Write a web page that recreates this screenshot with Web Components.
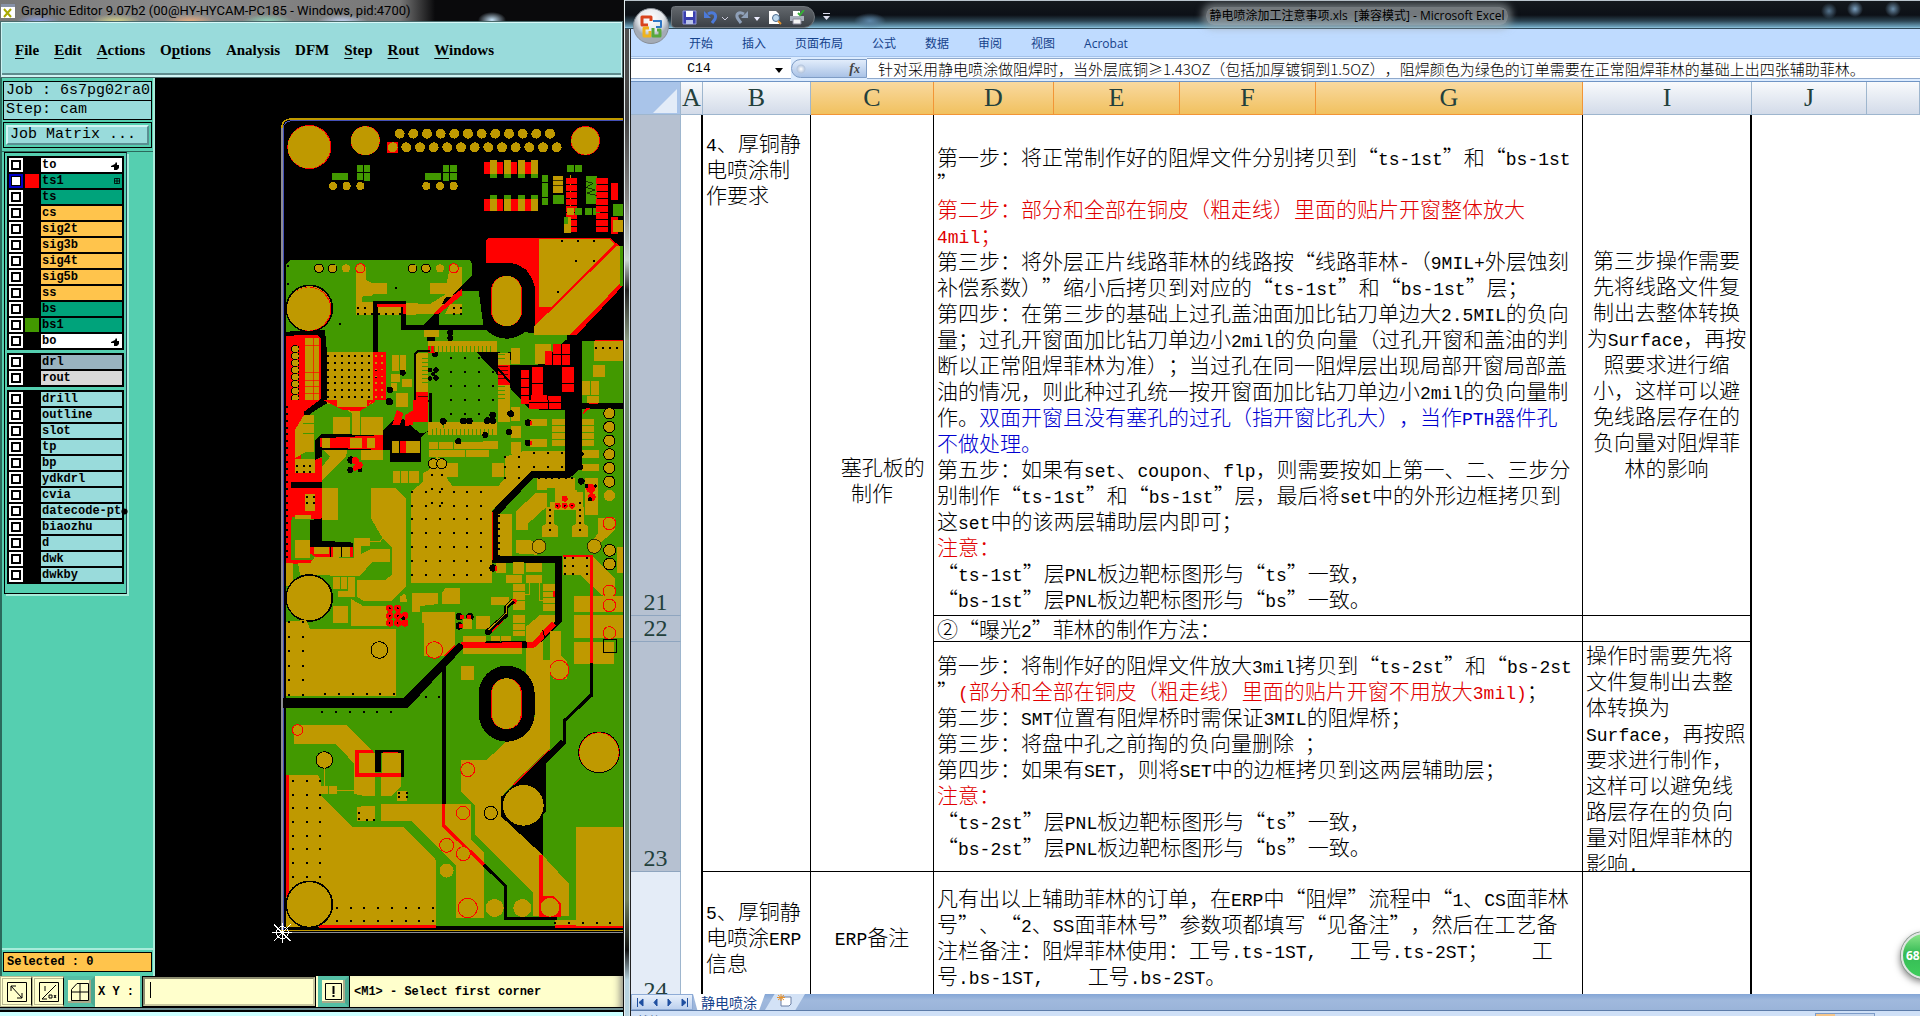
<!DOCTYPE html>
<html lang="zh-CN">
<head>
<meta charset="utf-8">
<title>Desktop</title>
<style>
  html, body { margin: 0; height: 100%; background: #000; overflow: hidden; }
</style>
</head>
<body>
<app-desktop>
  <graphic-editor slot="left"></graphic-editor>
  <excel-window slot="right"></excel-window>
</app-desktop>

<script>
class AppDesktop extends HTMLElement {
  constructor() {
    super();
    this.attachShadow({ mode: "open" });
    this.shadowRoot.innerHTML = `
      <style>
        :host {
          display: grid;
          grid-template-columns: minmax(0, 623fr) minmax(0, 1297fr);
          height: 100vh;
          position: relative;
          overflow: hidden;
        }
        ::slotted(*) { min-width: 0; min-height: 0; }
        .ball {
          position: absolute;
          right: -28px;
          bottom: 37px;
          width: 47px;
          height: 47px;
          border: 2px solid #dfe6e2;
          border-radius: 50%;
          background: linear-gradient(#8be58a, #35bb55 45%, #3fce5c);
          box-shadow: 0 0 0 1px #8b9a90, -1px 3px 7px rgba(0, 0, 0, .5);
          color: #fff;
          font: bold 12px/43px "Open Sans", sans-serif;
          padding-left: 3px;
          box-sizing: border-box;
        }
      </style>
      <slot name="left"></slot>
      <slot name="right"></slot>
      <div class="ball">68</div>
    `;
  }
}
customElements.define("app-desktop", AppDesktop);

/* ---------- left window ---------- */

class GraphicEditor extends HTMLElement {
  constructor() {
    super();
    this.attachShadow({ mode: "open" });
    this.shadowRoot.innerHTML = `
      <style>
        :host {
          display: flex;
          flex-direction: column;
          background: #000;
          color: #000;
          overflow: hidden;
        }
        .title {
          display: flex;
          align-items: center;
          gap: 5px;
          height: 21px;
          flex: none;
          font: 13px "Roboto", sans-serif;
          white-space: nowrap;
          background:
            radial-gradient(14px 8px at 492px 20px, #c8e4f8, transparent),
            radial-gradient(22px 8px at 38px 22px, #8fa2e6, transparent),
            radial-gradient(26px 8px at 116px 22px, #dcd98c, transparent),
            radial-gradient(26px 8px at 190px 22px, #f0b080, transparent),
            radial-gradient(26px 8px at 268px 22px, #8fdcc0, transparent),
            radial-gradient(26px 8px at 342px 22px, #c8d8f8, transparent),
            linear-gradient(90deg, #777 0, #8b8b8b 180px, #777 400px, #0a0a0c 435px);
        }
        .title svg { flex: none; }
        .main { display: flex; flex: 1; min-height: 0; }
        layer-panel { width: 155px; flex: none; }
        pcb-canvas { flex: 1; min-width: 0; }
        .foot { height: 4px; flex: none; background: #ccffff; border-top: 2px solid #000; box-shadow: 0 -2px #6f8f93; margin-top: 2px; }
      </style>
      <div class="title">
        <svg width="16" height="16" viewBox="0 0 16 16"><rect x="0.5" y="0.5" width="15" height="15" fill="#fff" stroke="#777"/><path d="M1 1h14v3H1z" fill="#8892a8"/><path d="M4 6l7 8M11 6l-7 8" stroke="#a8a800" stroke-width="2"/></svg>
        <span>Graphic Editor 9.07b2 (00@HY-HYCAM-PC185 - Windows, pid:4700)</span>
      </div>
      <editor-menu></editor-menu>
      <div class="main">
        <layer-panel></layer-panel>
        <pcb-canvas></pcb-canvas>
      </div>
      <editor-status></editor-status>
      <div class="foot"></div>
    `;
  }
}

class EditorMenu extends HTMLElement {
  constructor() {
    super();
    this.attachShadow({ mode: "open" });
    const items = ["<u>F</u>ile", "<u>E</u>dit", "<u>A</u>ctions", "O<u>p</u>tions", "Analysis", "DFM", "<u>S</u>tep", "<u>R</u>out", "<u>W</u>indows"];
    this.shadowRoot.innerHTML = `
      <style>
        :host {
          display: flex;
          align-items: center;
          gap: 15px;
          height: 57px;
          flex: none;
          box-sizing: border-box;
          padding: 2px 13px 0;
          background: #99dbdb;
          border: 2px solid #cdf3f3;
          border-top-color: #d8f8f8;
          border-bottom: 3px solid #d0f4f4;
          box-shadow: inset 0 -2px #5f8c8e;
          outline: 1px solid #4a6a6c;
          outline-offset: -1px;
        }
        button {
          border: 0;
          padding: 0;
          background: none;
          color: #000;
          font: bold 15px/20px "Liberation Serif", serif;
        }
        u { text-underline-offset: 3px; }
      </style>
      ${items.map(t => `<button>${t}</button>`).join("")}
    `;
  }
}

class LayerPanel extends HTMLElement {
  constructor() {
    super();
    this.attachShadow({ mode: "open" });
    const groups = [
      [["to", "white", "hand"], ["ts1", "teal", "grid", "#f00"], ["ts", "teal"], ["cs", "gold"], ["sig2t", "gold"], ["sig3b", "gold"],
       ["sig4t", "gold"], ["sig5b", "gold"], ["ss", "gold"], ["bs", "teal"], ["bs1", "teal", "", "#429900"], ["bo", "white", "hand"]],
      [["drl", "steel"], ["rout", "grey"]],
      ["drill", "outline", "slot", "tp", "bp", "ydkdrl", "cvia", "datecode-pt", "biaozhu", "d", "dwk", "dwkby"].map(n => [n, "cyan", n === "datecode-pt" ? "dot" : ""])
    ];
    const marks = {
      hand: `<svg width="9" height="9" viewBox="0 0 9 9"><path d="M0 5l4-2 1-2 1 1v2h2v3l-2 2H3V6H0z"/></svg>`,
      grid: `<svg width="6" height="6" viewBox="0 0 7 7"><path d="M.5.5h6v6h-6zM3.5 0v7M0 3.500h7" fill="none" stroke="#000"/></svg>`,
      dot: `<svg class="dot" width="7" height="7" viewBox="0 0 8 8"><circle cx="4" cy="4" r="3.500"/></svg>`
    };
    this.shadowRoot.innerHTML = `
      <style>
        :host {
          display: flex;
          flex-direction: column;
          background: #55cfb0;
          box-sizing: border-box;
          border-left: 2px solid #2b6a5c;
          border-right: 2px solid #a8ecda;
          font: bold 12px/14px "Liberation Mono", monospace;
        }
        .box {
          margin: 0 1px;
          padding: 0 2px;
          height: 18px;
          border: 1px solid #000;
          background: #99dbdb;
          font: 15px/18px "Liberation Mono", monospace;
          white-space: pre;
          overflow: hidden;
        }
        .box:first-of-type { margin-top: 3px; }
        .box + .box { border-top: 0; }
        .matrix { margin: 2px 1px 0; padding: 2px; border: 1px solid #000; }
        .matrix button {
          display: block;
          width: 100%;
          height: 20px;
          padding: 0 2px;
          border: 2px solid;
          border-color: #d2f4f4 #5a8f92 #5a8f92 #d2f4f4;
          background: #99dbdb;
          text-align: left;
          color: #000;
          font: 15px/16px "Liberation Mono", monospace;
        }
        .list {
          flex: 1;
          margin-top: 3px;
          padding-left: 2px;
          border-top: 1px solid #2b6a5c;
          border-bottom: 2px solid #a8ecda;
        }
        .frame {
          width: 117px;
          padding: 3px 2px 6px 2px;
          border: 1px solid #000;
          border-right-color: #245;
          box-shadow: 2px 2px #a8ecda;
        }
        .group { background: #000; padding: 1px 2px; margin-bottom: 3px; }
        label { display: flex; height: 16px; align-items: center; gap: 2px; }
        input {
          appearance: none;
          width: 14px;
          height: 14px;
          margin: 0;
          box-sizing: border-box;
          border: 2px solid #fff;
          background: #fff;
          box-shadow: inset 0 0 0 2px #000;
          flex: none;
        }
        input:checked { border-color: #0000c8; box-shadow: inset 0 0 0 1px #000; }
        i { width: 14px; height: 14px; flex: none; }
        span {
          flex: 1;
          min-width: 0;
          height: 14px;
          display: flex;
          align-items: center;
          justify-content: space-between;
          padding: 0 2px 0 1px;
          white-space: nowrap;
        }
        span svg { flex: none; }
        .dot { margin-right: -6px; }
        .white { background: #fff; }
        .teal { background: #00a37b; }
        .gold { background: #ffc44c; }
        .steel { background: #99b3bf; }
        .grey { background: #d9d9d9; }
        .cyan { background: #99dbdb; }
        .selected {
          margin: 2px 1px 4px;
          padding: 0 3px;
          height: 18px;
          line-height: 18px;
          border: 1px solid #000;
          background: #ffc44c;
          white-space: pre;
        }
      </style>
      <div class="box">Job : 6s7pg02ra0</div>
      <div class="box">Step: cam</div>
      <div class="matrix"><button>Job Matrix ...</button></div>
      <div class="list">
        <div class="frame">
          ${groups.map(rows => `<div class="group">${rows.map(([name, cls, mark, color]) => `
            <label><input type="checkbox" ${name === "ts1" ? "checked" : ""}><i style="background:${color || "#000"}"></i><span class="${cls}">${name}${marks[mark] || ""}</span></label>`).join("")}</div>`).join("")}
        </div>
      </div>
      <div class="selected">Selected : 0</div>
    `;
  }
}

class EditorStatus extends HTMLElement {
  constructor() {
    super();
    this.attachShadow({ mode: "open" });
    this.shadowRoot.innerHTML = `
      <style>
        :host {
          display: flex;
          height: 32px;
          flex: none;
          background: #ffffcc;
          font: bold 12px/32px "Liberation Mono", monospace;
          border-bottom: 1px solid #000;
          box-sizing: border-box;
        }
        button {
          width: 32px;
          padding: 0;
          background: #ffffcc;
          border: 3px double #b8b890;
          border-right: 1px solid #000;
          flex: none;
          display: grid;
          place-items: center;
        }
        button.on { border: 4px solid #55bfa5; box-shadow: inset -2px -2px #a9a98a; border-right-color: #4aa890; width: 31px; }
        svg { fill: none; stroke: #000; }
        label { width: 47px; padding-left: 3px; box-sizing: border-box; white-space: pre; border-right: 2px solid #55bfa5; }
        input {
          width: 174px;
          box-sizing: border-box;
          margin: 0 2px 0 0;
          border: 3px solid;
          border-color: #8c8c70 #c8c8a0 #c8c8a0 #8c8c70;
          background: linear-gradient(#000, #000) 5px 3px / 1px 16px no-repeat #ffffcc;
          font: inherit;
          outline: 1px solid #000;
          outline-offset: -1px;
        }
        output { padding-left: 4px; border-left: 1px solid #000; flex: 1; white-space: nowrap; overflow: hidden; box-shadow: inset -8px 0 8px -6px #777; }
      </style>
      <button aria-label="zoom"><svg width="20" height="20" viewBox="0 0 20 20"><path d="M.5.5h19v19H.5zM4 4l11 12M4 9V4h5M15 11v5h-5"/></svg></button>
      <button aria-label="ratio"><svg width="20" height="20" viewBox="0 0 20 20"><path d="M.5.5h19v19H.5zM3 17L17 3M3 17h5M6 4v5M10 13h3v3h-3zM15 13l2 3M17 13l-2 3"/></svg></button>
      <button class="on" aria-label="grid"><svg width="18" height="18" viewBox="0 0 18 18"><path d="M.5 17.500V6.500L6 .5h11.500v17zM9 .5v17M.5 9h17"/></svg></button>
      <label for="xy">X Y :</label><input id="xy">
      <button class="on" aria-label="alert"><svg width="17" height="17" viewBox="0 0 17 17"><path d="M.5.5h16v16H.5z"/><path d="M8.500 3v8M8.500 12v2" stroke-width="2"/></svg></button>
      <output>&lt;M1&gt; - Select first corner</output>
    `;
  }
}

/* board drawing, three units to a pixel */
class PcbCanvas extends HTMLElement {
  constructor() {
    super();
    this.attachShadow({ mode: "open" });
    const G = "#bf9900", N = "#429900", R = "#f00", K = "#000";
    const rect = (c, list) => list.map(([x, y, w, h]) => `<rect x="${x}" y="${y}" width="${w}" height="${h}" fill="${c}"/>`).join("");
    const poly = (c, list) => list.map(p => `<polygon points="${p}" fill="${c}"/>`).join("");
    const line = (c, w, list) => list.map(p => `<polyline points="${p}" fill="none" stroke="${c}" stroke-width="${w}"/>`).join("");
    const dot = (c, list) => list.map(([x, y, r]) => `<circle cx="${x}" cy="${y}" r="${r}" fill="${c}"/>`).join("");
    const ring = (c, list, w = 3) => list.map(([x, y, r]) => `<circle cx="${x}" cy="${y}" r="${r}" fill="${G}" stroke="${c}" stroke-width="${w}"/>`).join("");
    const grid = (x, y, nx, ny, dx, dy, c = K, s = 6) => {
      let d = "";
      for (let j = 0; j < ny; j++) for (let i = 0; i < nx; i++) d += `M${Math.round(x + i * dx)} ${Math.round(y + j * dy)}h${s}v${s}h-${s}z`;
      return `<path d="${d}" fill="${c}"/>`;
    };
    const row = (x, y, n, dx, r) => Array.from({ length: n }, (_, i) => [Math.round(x + i * dx), y, r]);
    const col = (x, y, n, dy, r) => Array.from({ length: n }, (_, i) => [x, Math.round(y + i * dy), r]);

    const base =
      poly(N, ["60,480 598,480 606,490 606,525 560,572 625,572 640,690 905,705 802,795 937,800 937,723 1070,723 1070,2480 57,2480 48,2200 48,492"]) +
      poly(K, ["620,757 690,757 690,795 890,795 890,705 937,705 937,1105 885,1130 885,930 780,928"]) +
      line(K, 22, ["911,1090 911,1110 895,1123 785,1123 677,1238 677,1378 866,1378 866,1560 792,1634 578,1634"]);

    const top =
      `<path d="M36 2500V80Q38 58 62 57H1070" fill="none" stroke="${G}" stroke-width="5"/><path d="M36 2490V84" stroke="#8d8d93" stroke-width="4"/><path d="M40 2490V84Q42 63 66 62H1070" fill="none" stroke="#4450b8" stroke-width="3"/>` +
      dot(R, [[118, 141, 66], [286, 122, 44], [946, 122, 44]]) + dot(G, [[117, 141, 64], [286, 122, 43], [946, 122, 42]]) +
      dot(G, row(389, 101, 12, 41, 15)) + rect(R, [[352, 127, 31, 31]]) + dot(G, row(368, 142, 13, 41, 15)) +
      rect(N, [[186, 219, 48, 21], [261, 195, 18, 21], [281, 195, 19, 21], [261, 219, 18, 21], [281, 219, 19, 24], [465, 219, 48, 21], [519, 195, 19, 21], [540, 195, 21, 21], [519, 219, 18, 24], [540, 219, 21, 21]]) +
      dot(G, [...row(189, 258, 3, 41, 12), ...row(469, 258, 3, 41, 12)]) +
      rect(R, [[642, 186, 160, 36], [642, 297, 160, 36]]) + rect(K, [[700, 186, 3, 36], [742, 186, 3, 36], [700, 297, 3, 36]]) +
      rect(G, [660, 702, 744, 783].flatMap(x => [[x, 180, 20, 42], [x, 297, 20, 36]])) +
      rect(N, [660, 702, 744, 783].flatMap(x => [[x, 222, 21, 12], [x, 285, 21, 12]])) +
      rect(N, [[816, 225, 18, 22], [816, 250, 18, 40], [816, 293, 18, 22], [849, 285, 33, 27], [891, 195, 21, 21], [915, 195, 21, 21], [948, 228, 32, 84], [1030, 312, 30, 36], [945, 324, 21, 21], [969, 324, 21, 21]]) +
      rect(G, [[849, 228, 30, 50], [900, 225, 3, 100]]) +
      rect(R, [[1023, 249, 21, 51], [1023, 351, 21, 50], ...[234, 255, 276, 297, 318, 340, 360, 380].flatMap(y => [[888, y, 34, 17], [977, y, 36, 17]])]) +
      rect(G, [[891, 324, 20, 21], [883, 352, 20, 46], [1030, 360, 28, 36]]) + rect(N, [[915, 324, 21, 21], [883, 352, 12, 20]]) +
      line(K, 2, ["948,245 970,250 948,262 975,270 950,280 980,286", "850,240 878,240", "850,256 878,256"]) +
      poly(R, ["656,414 1022,414 1056,446 1056,560 920,705 795,705 795,560 770,510 740,492 648,489 648,422"]) +
      poly(G, ["807,417 1020,417 1034,432 845,621 807,621", "1040,438 1056,438 1056,545 900,705 792,705 792,680"]) +
      rect(N, [[1050, 438, 8, 120]]) + grid(873, 420, 3, 1, 48, 1) + grid(915, 480, 2, 1, 54, 1) + grid(861, 573, 1, 1, 1, 1) +
      `<rect x="626" y="488" width="168" height="228" rx="84" fill="#000"/><rect x="663" y="528" width="93" height="150" rx="45" fill="${R}"/><rect x="666" y="528" width="88" height="150" rx="44" fill="${G}"/>` +
      poly(G, ["258,500 288,500 288,540 305,549 351,549 351,582 310,582 310,603 258,603", "540,500 576,500 576,570 540,600 510,640 408,645 258,645 258,603 480,612 528,582 480,582 480,549 530,549"]) +
      poly(N, ["580,572 626,572 640,675 507,675 507,645"]) +
      poly(K, ["606,525 606,545 507,645 507,690 445,690 530,605", "515,612 528,590 555,590 535,615"]) + poly(R, ["577,565 577,585 505,643 490,643 545,590"]) +
      poly(N, ["276,590 330,584 330,603 276,606"]) +
      poly(G, ["540,612 576,612 576,643 525,643"]) +
      ring(K, [[147, 505, 13], [188, 505, 13], [428, 505, 13], [468, 505, 13]]) + dot(G, [[228, 505, 12], [510, 505, 12]]) + ring(R, [[271, 505, 14], [551, 505, 14]]) +
      line(K, 14, ["316,760 316,610 400,610 400,682 640,682"]) + line(R, 9, ["322,616 402,616 402,642"]) +
      grid(261, 622, 2, 2, 21, 17) + grid(303, 639, 5, 1, 21, 1) + grid(550, 620, 2, 2, 20, 18) + grid(375, 561, 1, 1, 1, 1) + grid(207, 669, 1, 1, 1, 1) + grid(51, 495, 1, 2, 1, 54) +
      ring(K, [[118, 625, 69]], 5) + dot(R, [[118, 627, 66]]) + dot(G, [[116, 627, 65]]) +
      poly(K, ["48,695 165,690 171,756 171,910 130,935 100,960 48,960"]) +
      poly(R, ["48,707 143,705 152,715 152,898 102,935 102,1000 48,1390"]) +
      rect(G, [[105, 714, 42, 186]]) + line(R, 2, ["130,714 130,900", "105,737 150,737", "105,818 150,818", "105,840 150,840", "105,860 150,860", "105,880 150,880"]) +
      ring(K, col(76, 747, 8, 21, 11)) + dot(G, col(76, 747, 8, 21, 10)) +
      rect(G, [[171, 756, 138, 156]]) + rect(R, [[309, 756, 38, 145]]) + grid(171, 765, 8, 7, 20.500, 20.600) + grid(315, 765, 2, 7, 18, 20.600, G, 5) +
      poly(G, ["210,912 310,900 270,935 270,960 245,960 245,940"]) + poly(R, ["213,912 300,912 315,895 315,905 270,933 245,933"]) +
      rect(G, [[366, 766, 20, 46], [389, 766, 19, 46], [363, 822, 26, 25], [396, 836, 30, 25], [378, 880, 36, 40], [363, 850, 18, 22]]) +
      dot(K, [[398, 818, 9], [360, 870, 10], [358, 905, 11], [483, 715, 13], [495, 762, 9], [541, 698, 9], [541, 714, 9], [720, 768, 12], [724, 940, 11]]) +
      dot(K, [[480, 810, 7], [480, 836, 7], [498, 810, 8], [498, 834, 8], [490, 822, 6], [668, 945, 10]]) +
      rect(G, [[462, 690, 45, 22], [474, 722, 207, 33], [439, 760, 36, 116], [684, 760, 36, 200], [724, 744, 26, 48], [724, 922, 26, 40]]) + rect(R, [[474, 738, 20, 22], [439, 876, 36, 84], [684, 795, 36, 60]]) +
      line(K, 6, ["434,960 434,762 445,753 480,753", "640,757 790,925"]) + rect(K, [[476, 878, 10, 90]]) +
      grid(540, 772, 4, 5, 41.500, 41.500) + `<path d="M480 738v17m12-17v17m12-17v17m12-17v17m12-17v17m12-17v17m12-17v17m12-17v17m12-17v17m12-17v17m12-17v17m12-17v17m12-17v17m12-17v17m12-17v17m12-17v17" stroke="${N}" stroke-width="3"/><path d="M455 775h20m-20 12h20m-20 12h20m-20 12h20m-20 12h20m-20 12h20m-20 12h20m210-85h20m-20 12h20m-20 85h20m-20 12h20m-20 12h20m-20 12h20" stroke="${N}" stroke-width="3"/><path d="M445 890h28m-28 12h28m-28 12h28m-28 12h28m-28 12h28m-28 12h28m212-150h30m-30 12h30m-30 12h30m-30 12h30" stroke="#000" stroke-width="2"/>` +
      rect(G, [[795, 732, 48, 60]]) + rect(R, [[825, 752, 20, 42], [849, 732, 24, 30], [876, 732, 24, 30], [849, 766, 24, 28], [876, 766, 24, 28], ...[801, 826, 852].flatMap(y => [[786, y, 33, 23], [876, y, 36, 23]]), [786, 876, 33, 8], [753, 810, 24, 25], [753, 838, 24, 22], [753, 863, 24, 22], [753, 888, 24, 25], [783, 885, 48, 22], [834, 889, 38, 38], [780, 911, 50, 16]]) +
      rect(G, [[972, 723, 86, 60], [937, 843, 24, 42], [964, 843, 22, 42], [969, 795, 35, 36], [950, 888, 36, 22]]) + grid(975, 742, 4, 1, 21, 1) + line(R, 3, ["975,722 1058,722"]) +
      line(K, 16, ["937,918 1058,918"]) + poly(R, ["935,945 957,910 984,910 984,925 960,925"]);

    const mid =
      poly(R, ["48,0 102,0 102,35 75,60 75,180 156,175 156,250 75,245 78,264 156,264 156,360 62,350 62,480 128,480 135,470 120,460 120,420 250,430 250,470 160,474 130,492 48,492"]) +
      grid(48, 18, 1, 23, 1, 20.500) +
      poly(G, ["102,45 132,45 132,155 108,155 75,175 75,90", "188,52 240,52 240,110 228,170 156,242 156,200 180,170 150,140 190,115"]) +
      rect(G, [[74, 178, 60, 42], [272, 52, 66, 128], [245, 0, 24, 110]]) + line(N, 3, ["100,70 132,70", "100,100 132,100"]) +
      poly(K, ["135,120 155,102 340,105 340,90 385,45 420,75 450,100 480,95 480,60 475,0 485,0 485,80 452,115 452,186 360,186 360,150 156,150 156,170 135,180", "62,245 156,245 156,264 62,264", "120,360 156,355 156,422 250,428 250,440 120,440"]) +
      poly(R, ["150,115 340,105 340,150 150,142", "380,30 400,40 390,75 367,75", "430,0 473,0 473,66 430,66", "160,0 310,0 270,34 220,30", "405,45 428,32 428,75 405,78"]) +
      rect(G, [[156, 115, 24, 30], [240, 115, 36, 28], [290, 115, 24, 30], [367, 122, 20, 38], [409, 122, 40, 38], [200, 0, 90, 22]]) + rect(R, [[389, 122, 20, 38]]) +
      dot(K, [[243, 180, 11], [241, 210, 9], [270, 210, 7]]) + dot(R, [[256, 182, 11], [267, 196, 11], [256, 204, 8]]) +
      rect(G, [[156, 264, 48, 95], [105, 283, 29, 50], [75, 345, 48, 12], [75, 420, 45, 54], [252, 414, 48, 24], [252, 438, 20, 38], [132, 441, 45, 21], [190, 441, 49, 30], [369, 212, 78, 36]]) +
      line(K, 3, ["182,440 182,470", "215,440 215,470"]) + line(N, 3, ["390,212 390,248", "416,212 416,248"]) + line(G, 3, ["300,424 330,424 345,408"]) +
      rect(N, [[64, 360, 56, 60], [64, 420, 12, 54]]) + grid(78, 195, 3, 2, 20, 18) + grid(108, 288, 2, 2, 20, 18) +
      poly(G, ["303,264 378,264 408,296 408,560 365,603 280,603 262,590 262,540 345,540 365,525 365,440 303,380", "135,470 250,474 302,447 360,447 360,486 306,486 270,528 90,525 84,490 120,490", "48,490 70,490 70,550 48,560"]) + poly(N, ["303,355 335,410 303,410"]) +
      poly(G, ["423,275 460,245 460,218 475,212 500,170 525,185 530,235 548,258 685,258 705,235 705,170 760,153 885,153 885,212 785,212 667,330 667,548 423,548"]) +
      rect(G, [[525, 188, 40, 42], [667, 188, 36, 42], [477, 125, 180, 45], [640, 122, 43, 25], [475, 66, 206, 38], [684, 0, 36, 66], [724, 20, 26, 36], [722, 78, 30, 36], [724, 125, 28, 38], [780, 57, 50, 22], [780, 118, 50, 22], [846, 57, 38, 80]]) +
      line(N, 3, ["505,125 505,150", "550,125 550,148", "477,148 657,148", "585,148 585,170", "846,76 884,76", "846,97 884,97", "846,117 884,117", "500,85 500,104", "520,66 520,84"]) +
      `<path d="M486 86v18m12-18v18m12-18v18m12-18v18m12-18v18m12-18v18m12-18v18m12-18v18m12-18v18m12-18v18m12-18v18m12-18v18m12-18v18m12-18v18m12-18v18m12-18v18" stroke="${N}" stroke-width="3"/>` +
      dot(K, [[520, 64, 10], [580, 63, 10], [598, 63, 10], [652, 62, 10], [668, 62, 10], [722, 41, 10], [717, 96, 9], [646, 105, 9], [565, 124, 9], [774, 68, 10], [774, 129, 10]]) +
      rect(R, [[780, 62, 6, 12], [780, 123, 6, 12], [778, 0, 95, 26]]) + line(K, 3, ["778,8 873,8", "836,0 836,26"]) +
      ring(K, [[490, 191, 15], [515, 191, 15]]) + grid(423, 272, 6, 7, 41.500, 41.500) + grid(483, 222, 2, 3, 30, 42) + grid(702, 168, 2, 3, 42, 31) + grid(789, 155, 3, 2, 42, 43) +
      line(R, 3, ["667,335 667,480"]) + rect(G, [[684, 342, 42, 126]]) + grid(685, 345, 1, 7, 1, 20) +
      rect(G, [[801, 234, 114, 36], [937, 57, 34, 80], [937, 150, 50, 24], [937, 192, 50, 22], [945, 235, 40, 110], [920, 275, 18, 110], [840, 270, 80, 60]]) + line(N, 3, ["937,76 971,76", "937,97 971,97", "937,117 971,117"]) +
      poly(G, ["795,280 830,280 830,320 775,370 775,390 738,390 738,335", "828,320 852,320 852,370 864,380 864,410 816,410 816,380 828,370", "918,320 942,320 942,370 954,380 954,410 906,410 906,380 918,370"]) +
      rect(N, [[830, 265, 24, 40]]) + grid(837, 326, 1, 4, 1, 20) + grid(927, 306, 1, 5, 1, 20) + grid(804, 232, 6, 1, 20, 1) +
      dot(R, [[863, 317, 9], [884, 317, 9], [906, 317, 9], [884, 296, 9], [962, 265, 14], [965, 292, 12]]) + dot(K, [[862, 317, 3], [884, 317, 3], [906, 317, 3], [934, 244, 10], [950, 258, 6], [977, 258, 5], [960, 298, 6], [932, 202, 8], [933, 162, 8]]) +
      poly(G, ["738,420 780,420 800,430 830,440 800,464 738,460", "985,355 1035,355 1035,390 990,430 965,450 955,435 985,400"]) + ring(R, [[1018, 370, 19]]) + ring(K, [[807, 439, 21], [973, 439, 21]], 2) +
      line(K, 10, ["937,18 1058,18"]) + ring(K, [...col(1018, 40, 6, 41, 17), [1019, 451, 18], [1019, 492, 18]]) + dot(G, [[1018, 287, 17]]) +
      poly(G, ["880,470 970,470 1035,535 1035,600 995,585 930,525 880,525"]) + grid(883, 472, 2, 3, 22, 24) + grid(948, 472, 1, 3, 1, 24) + ring(R, [[1018, 574, 19]]) +
      rect(G, [[912, 587, 146, 49], [912, 645, 146, 68], [912, 726, 120, 66]]) + ring(R, [[1018, 616, 19], [1018, 699, 19]]) + `<rect x="1001" y="719" width="38" height="38" fill="none" stroke="#000" stroke-width="3"/>` +
      line(R, 8, ["880,468 965,468 965,790"]) + line(K, 6, ["965,790 965,890"]) +
      ring(K, [[118, 594, 69]], 5) + dot(G, [[116, 594, 66]]) +
      rect(G, [[190, 530, 20, 36], [212, 532, 18, 36], [234, 530, 20, 60], [205, 572, 50, 20], [190, 618, 22, 50], [214, 618, 20, 50]]) +
      poly(G, ["243,597 280,618 350,618 350,678 243,678"]) +
      poly(G, ["48,665 108,660 120,686 378,686 378,888 48,888"]) + grid(54, 664, 2, 6, 42, 43.500) + grid(162, 879, 6, 1, 41.500, 1) + ring(K, [[328, 750, 25]]) +
      poly(G, ["425,580 505,580 505,612 450,618 450,636 425,636", "515,580 525,565 570,565 570,612 515,612", "390,590 405,580 412,605 390,605"]) +
      dot(R, [[359, 625, 11], [383, 625, 11], [359, 647, 11], [383, 647, 11], [404, 647, 11], [359, 669, 11], [383, 669, 11], [404, 669, 11]]) + dot(K, [[359, 625, 3], [383, 625, 3], [359, 647, 3], [383, 647, 3], [400, 655, 6], [359, 669, 3], [383, 669, 3]]) +
      poly(G, ["456,636 555,636 555,768 462,768 462,670 456,670"]) + poly(R, ["555,735 555,768 520,768"]) + ring(R, [[493, 750, 25]]) +
      dot(K, [[568, 650, 11], [600, 650, 11], [568, 678, 11]]) + rect(R, [[570, 646, 12, 12], [590, 646, 14, 12], [568, 672, 12, 12]]) + rect(G, [[578, 656, 28, 30], [618, 648, 42, 40]]) +
      rect(G, [[663, 590, 54, 24], [708, 525, 48, 24], [729, 486, 32, 36], [768, 490, 48, 26], [768, 525, 48, 24], [678, 488, 30, 32], [730, 552, 35, 22], [730, 577, 35, 24], [730, 604, 35, 26], [730, 646, 35, 22], [730, 671, 35, 36], [820, 552, 34, 80], [578, 708, 70, 18], [662, 708, 60, 16], [578, 744, 178, 18]]) +
      line(N, 3, ["820,573 856,573", "820,591 856,591", "820,611 856,611", "690,705 690,728", "730,690 765,690"]) + line(G, 3, ["778,549 778,582 765,582", "807,549 807,600 820,603"]) +
      dot(K, [[669, 504, 11], [655, 695, 10]]) + rect(R, [[674, 498, 6, 14], [848, 574, 8, 18]]) + dot(R, [[732, 604, 8]]) +
      line(K, 14, ["655,693 708,645 708,622 730,602"]) + line(G, 3, ["655,690 708,640 708,620 728,600"]) + line(R, 3, ["665,695 700,662"]) +
      poly(G, ["768,680 810,645 855,645 855,665 790,740 768,740"]) + line(R, 18, ["572,735 792,735 852,670"]) + rect(K, [[757, 726, 14, 18]]) + line(K, 3, ["645,728 695,728", "818,690 824,712 850,686"]) +
      poly(G, ["768,745 790,745 820,720 820,820 840,840 840,910 768,910", "840,694 872,694 872,765 890,782 890,838 850,838 840,800"]) + ring(R, [[868, 810, 29]]) +
      rect(G, [[573, 797, 39, 42], [1042, 440, 16, 80]]);

    const low =
      line(K, 11, ["521,-60 521,372"]) + poly(K, ["565,-112 580,-104 580,-96 414,84 38,84 38,54 400,54 553,-99"]) +
      grid(153, 93, 6, 1, 41.500, 1) + grid(465, 48, 2, 1, 38, 1) +
      poly(G, ["768,-60 840,-60 840,205 740,300 695,350 695,405 808,515 897,612 897,708 789,708 789,636 615,465 615,375 573,335 573,240 650,240 705,188 795,110"]) +
      `<rect x="626" y="-43" width="168" height="228" rx="84" fill="#000"/><rect x="663" y="-5" width="93" height="152" rx="45" fill="${R}"/><rect x="666" y="-5" width="86" height="152" rx="43" fill="${G}"/>` +
      line(K, 10, ["965,-50 965,43 883,123 883,188 835,238"]) +
      poly(K, ["888,185 828,250 828,395 818,405 818,525 694,410 694,350 840,210 870,180"]) + line(R, 3, ["838,210 730,315"]) + line(R, 10, ["813,525 813,700"]) +
      dot(G, [[760, 376, 61]]) + ring(K, [[987, 217, 61]]) + dot(R, [[987, 217, 60]]) + dot(G, [[987, 218, 59]]) +
      poly(G, ["72,135 228,135 315,220 315,348 285,348 252,342 252,250 197,192 72,192", "48,285 143,285 152,300 152,345 248,441 400,441 498,540 498,740 48,740", "333,290 393,290 393,318 365,348 333,348", "261,380 315,378 315,422 261,422", "333,373 603,373 603,480 642,518 642,713 558,713 558,555 425,423 333,423"]) +
      ring(R, [[83, 150, 16]]) + ring(K, [[163, 240, 25]]) + line(G, 3, ["163,265 163,320", "200,330 260,330"]) + rect(G, [[150, 318, 24, 24], [177, 318, 24, 24], [382, 332, 30, 30]]) +
      line(K, 8, ["320,214 397,214 397,288 330,288"]) + line(R, 10, ["310,216 261,216 261,285 393,285"]) + rect(K, [[316, 210, 18, 66]]) + rect(R, [[266, 216, 45, 8], [340, 216, 45, 6]]) +
      rect(G, [[268, 220, 46, 58], [336, 220, 56, 58], [270, 290, 45, 14]]) + grid(384, 335, 2, 2, 24, 14) + grid(264, 395, 1, 2, 1, 20) + grid(288, 416, 2, 1, 20, 1) +
      rect(R, [[48, 285, 9, 365], [147, 735, 351, 9], [855, 734, 203, 10]]) + rect(K, [[498, 737, 357, 8], [48, 745, 1010, 6]]) +
      grid(66, 300, 3, 8, 41, 41) + grid(198, 682, 8, 2, 41.200, 38) + ring(K, [[118, 673, 69]], 5) + dot(G, [[117, 674, 66]]) +
      line(R, 10, ["521,372 521,437 642,555"]) + line(K, 9, ["642,555 707,619 707,716 860,716"]) +
      rect(G, [[918, 441, 140, 296], [855, 720, 80, 14]]) + rect(N, [[902, 700, 14, 18]]) + grid(852, 726, 5, 1, 41.500, 1) +
      ring(R, [[593, 269, 21], [579, 399, 20], [530, 496, 21], [580, 521, 21], [593, 684, 29]]) + ring(K, [[662, 399, 20]]) + dot(G, [[530, 572, 21], [674, 684, 27], [757, 684, 27]]) +
      poly(R, ["810,648 850,648 872,670 872,712 808,712"]) + dot(G, [[840, 682, 28]]) +
      line(G, 3, ["36,752 1070,752"]) + line("#8d8d93", 4, ["50,758 1070,758"]) +
      `<path d="M37 728v60M6 758h60M12 733l50 50M12 783l50-50" stroke="#fff" stroke-width="3"/><circle cx="37" cy="758" r="18" fill="none" stroke="#fff" stroke-width="3"/>`;

    this.shadowRoot.innerHTML = `
      <style>
        :host { display: block; background: #000; overflow: hidden; }
        svg { display: block; width: 100%; height: 100%; }
      </style>
      <svg viewBox="-345 -66 1404 2694" preserveAspectRatio="xMinYMin slice" shape-rendering="crispEdges">
        ${base}${top}
        <g transform="translate(0 900)">${mid}</g>
        <g transform="translate(0 1740)">${low}</g>
      </svg>
    `;
  }
}

/* ---------- right window ---------- */

class ExcelWindow extends HTMLElement {
  constructor() {
    super();
    this.attachShadow({ mode: "open" });
    this.shadowRoot.innerHTML = `
      <style>
        :host {
          display: flex;
          flex-direction: column;
          box-sizing: border-box;
          padding-left: 8px;
          background: linear-gradient(90deg, #111 0 1px, #e4eef0 1px 2px, transparent 2px 6px, #d7e6ea 6px 7px, #222 7px 8px, transparent 8px),
            linear-gradient(#555 0, #444 120px, #888 200px, #c9d8d2 260px, #222 290px, #8a9a80 340px, #4a7a58 520px, #5c8f70 800px, #70805c 900px, #111 950px, #b8d4e0 980px);
          overflow: hidden;
        }
        excel-sheet { flex: 1; min-height: 0; }
      </style>
      <excel-title></excel-title>
      <excel-ribbon></excel-ribbon>
      <formula-bar></formula-bar>
      <excel-sheet></excel-sheet>
      <sheet-tabs></sheet-tabs>
    `;
  }
}

class ExcelTitle extends HTMLElement {
  constructor() {
    super();
    this.attachShadow({ mode: "open" });
    this.shadowRoot.innerHTML = `
      <style>
        :host {
          display: flex;
          height: 29px;
          flex: none;
          box-sizing: border-box;
          border-top: 1px solid #b9c4cc;
          border-bottom: 1px solid #2f4a5c;
          margin-left: -6px;
          padding-left: 6px;
          background:
            radial-gradient(16px 8px at 245px 20px, #5d86a8, transparent),
            radial-gradient(8px 8px at 1204px 10px, #55738c, transparent),
            radial-gradient(8px 8px at 1230px 8px, #7ba0c0, transparent),
            radial-gradient(8px 8px at 1268px 8px, #6a8ca8, transparent),
            linear-gradient(#14191d 0, #0c1016 14px, #2c4452 20px, #6fa5c0 26px, #9fd0e6);
          position: relative;
          font: 12px "Open Sans", "Noto Sans CJK SC", sans-serif;
        }
        .orb { position: absolute; left: 8px; top: 7px; z-index: 2; padding: 0; border: 0; background: none; }
        .orb svg { display: block; }
        .quick {
          display: flex;
          align-items: center;
          gap: 7px;
          width: 144px;
          height: 22px;
          margin: 5px 0 0 40px;
          padding-left: 10px;
          box-sizing: border-box;
          border-radius: 4px 12px 12px 4px;
          background: linear-gradient(#62676c, #3b4046);
          border: 1px solid #70767c;
        }
        .quick button { padding: 0; border: 0; background: none; display: block; }
        .quick svg { display: block; }
        .more { align-self: center; margin-left: 8px; padding: 4px 0 0; border: 0; background: none; }
        .name { flex: 1; display: flex; justify-content: center; align-items: center; padding: 2px 36px 0 0; white-space: pre; }
        .name span { padding: 0 4px; line-height: 18px; background: rgba(170, 176, 180, .65); box-shadow: 0 0 7px 4px rgba(160, 168, 172, .6); border-radius: 8px; }
      </style>
      <button class="orb" aria-label="Office">
        <svg width="37" height="37" viewBox="0 0 37 37">
          <defs><radialGradient id="o" cy=".3"><stop offset="0" stop-color="#fff"/><stop offset=".7" stop-color="#e4e7ec"/><stop offset="1" stop-color="#a4abb5"/></radialGradient></defs>
          <circle cx="18" cy="18" r="17.500" fill="url(#o)" stroke="#888e96"/>
          <g fill="none" stroke-width="3" stroke-linejoin="round">
            <path d="M15 17H9V9h9v4" stroke="#d9441e"/><path d="M20 13h8v6h-5" stroke="#2f77c4" stroke-width="2"/>
            <path d="M16 20h-5v8h6v-5" stroke="#f0b31c"/><path d="M20 20v8h7v-6h-3" stroke="#58a83c"/>
          </g>
        </svg>
      </button>
      <div class="quick">
        <button aria-label="save"><svg width="15" height="15" viewBox="0 0 15 15"><path d="M1 1h13v13H1z" fill="#3a3fae" stroke="#8c94dc"/><path d="M4 1h7v6H4z" fill="#fff"/><path d="M4 10h7v4H4z" fill="#b8c4e8"/></svg></button>
        <button aria-label="undo"><svg width="24" height="14" viewBox="0 0 24 14"><path d="M4 4c5-3 9 0 7 5l-3 4" fill="none" stroke="#4c7ad8" stroke-width="3"/><path d="M0 1v7h7z" fill="#4c7ad8"/><path d="M18 7l3 3 3-3" fill="none" stroke="#ccd"/></svg></button>
        <button aria-label="redo"><svg width="26" height="14" viewBox="0 0 26 14"><path d="M9 4C4 1 0 4 3 9l3 4" fill="none" stroke="#8fa0b8" stroke-width="3"/><path d="M13 1v7H6z" fill="#8fa0b8"/><path d="M19 7h6l-3 4z" fill="#eef"/></svg></button>
        <button aria-label="preview"><svg width="14" height="15" viewBox="0 0 14 15"><path d="M1 1h7l3 3v10H1z" fill="#fff"/><circle cx="8" cy="8" r="3.500" fill="#bcd8ee" stroke="#4c6c90"/><path d="M10 11l3 3" stroke="#e0902c" stroke-width="2"/></svg></button>
        <button aria-label="print"><svg width="16" height="15" viewBox="0 0 16 15"><path d="M4 1h7v5H4z" fill="#fff"/><path d="M1 6h14v5H1z" fill="#a8b0bc"/><path d="M4 9h8v5H4z" fill="#f4f4f4" stroke="#889"/><path d="M9 3l2 2 4-5" fill="none" stroke="#35b035" stroke-width="2"/></svg></button>
      </div>
      <button class="more" aria-label="customize"><svg width="7" height="8" viewBox="0 0 7 8"><path d="M0 .5h7" stroke="#dde"/><path d="M0 3h7L3.500 7z" fill="#dde"/></svg></button>
      <div class="name"><span>静电喷涂加工注意事项.xls  [兼容模式] - Microsoft Excel</span></div>
    `;
  }
}

class ExcelRibbon extends HTMLElement {
  constructor() {
    super();
    this.attachShadow({ mode: "open" });
    this.shadowRoot.innerHTML = `
      <style>
        :host {
          display: flex;
          align-items: center;
          gap: 29px;
          height: 28px;
          flex: none;
          padding: 2px 0 0 58px;
          background: #bfdbff;
          box-sizing: border-box;
          border-bottom: 1px solid #a4c2ea;
        }
        button { padding: 0; border: 0; background: none; color: #15428b; font: 12px/20px "Open Sans", "Noto Sans CJK SC", sans-serif; }
      </style>
      ${["开始", "插入", "页面布局", "公式", "数据", "审阅", "视图", "Acrobat"].map(t => `<button>${t}</button>`).join("")}
    `;
  }
}

class FormulaBar extends HTMLElement {
  constructor() {
    super();
    this.attachShadow({ mode: "open" });
    this.shadowRoot.innerHTML = `
      <style>
        :host {
          display: flex;
          height: 25px;
          flex: none;
          box-sizing: border-box;
          padding: 2px 0 3px;
          background: #dcecff;
          border-bottom: 1px solid #6f94c4;
        }
        input { border: 0; padding: 0; margin: 0; background: #fff; color: #000; outline: 0; box-shadow: 0 1px #8fa9cc, 0 -1px #8fa9cc; }
        .cell { width: 136px; font: 13px "Liberation Mono", monospace; text-align: center; }
        .drop { width: 24px; padding: 0; border: 0; background: #fff; box-shadow: 0 1px #8fa9cc, 0 -1px #8fa9cc; }
        .fx {
          width: 76px;
          padding: 0 6px 0 0;
          border: 1px solid #7f9dc6;
          border-radius: 10px 0 0 10px;
          background: radial-gradient(5px 5px at 9px 9px, #fff, #b5c6de 4px, transparent 5px), linear-gradient(#e2edfb, #a9c2e6);
          text-align: right;
          font: italic bold 14px/16px "Liberation Serif", serif;
          color: #444;
        }
        .fx small { font-size: 12px; }
        .text { flex: 1; min-width: 0; padding-left: 11px; font: 300 15px "Noto Sans CJK SC", sans-serif; text-spacing-trim: space-all; }
      </style>
      <input class="cell" aria-label="name box" value="C14">
      <button class="drop" aria-label="names"><svg width="8" height="5" viewBox="0 0 8 5"><path d="M0 0h8L4 5z"/></svg></button>
      <button class="fx">f<small>x</small></button>
      <input class="text" aria-label="formula" value="针对采用静电喷涂做阻焊时，当外层底铜≥1.43OZ（包括加厚镀铜到1.5OZ），阻焊颜色为绿色的订单需要在正常阻焊菲林的基础上出四张辅助菲林。">
    `;
  }
}

class ExcelSheet extends HTMLElement {
  constructor() {
    super();
    this.attachShadow({ mode: "open" });
    // half-width runs get the narrow face, tags are kept
    const lines = list => list.map(s => `<p>${s.replace(/<[^>]+>|[ -;=?-~]+/g, m => m[0] === "<" ? m : `<span>${m}</span>`)}</p>`).join("");
    const red = s => `<em class="red">${s}</em>`;
    const blue = s => `<em class="blue">${s}</em>`;

    const step1 = [
      "第一步：将正常制作好的阻焊文件分别拷贝到“ts-1st”和“bs-1st", "”",
      red("第二步：部分和全部在铜皮（粗走线）里面的贴片开窗整体放大"), red("4mil；"),
      "第三步：将外层正片线路菲林的线路按“线路菲林-（9MIL+外层蚀刻", "补偿系数）”缩小后拷贝到对应的“ts-1st”和“bs-1st”层；",
      "第四步：在第三步的基础上过孔盖油面加比钻刀单边大2.5MIL的负向", "量；过孔开窗面加比钻刀单边小2mil的负向量（过孔开窗和盖油的判",
      "断以正常阻焊菲林为准）；当过孔在同一阻焊层出现局部开窗局部盖", "油的情况，则此种过孔统一按开窗面加比钻刀单边小2mil的负向量制",
      "作。" + blue("双面开窗且没有塞孔的过孔（指开窗比孔大），当作PTH器件孔"), blue("不做处理。"),
      "第五步：如果有set、coupon、flp，则需要按如上第一、二、三步分", "别制作“ts-1st”和“bs-1st”层，最后将set中的外形边框拷贝到",
      "这set中的该两层辅助层内即可；", red("注意："),
      "“ts-1st”层PNL板边靶标图形与“ts”一致，", "“bs-1st”层PNL板边靶标图形与“bs”一致。"
    ];
    const step2 = [
      "第一步：将制作好的阻焊文件放大3mil拷贝到“ts-2st”和“bs-2st", "”" + red("(部分和全部在铜皮（粗走线）里面的贴片开窗不用放大3mil)") + "；",
      "第二步：SMT位置有阻焊桥时需保证3MIL的阻焊桥；", "第三步：将盘中孔之前掏的负向量删除 ；", "第四步：如果有SET，则将SET中的边框拷贝到这两层辅助层；",
      red("注意："), "“ts-2st”层PNL板边靶标图形与“ts”一致，", "“bs-2st”层PNL板边靶标图形与“bs”一致。"
    ];
    const erp = [
      "凡有出以上辅助菲林的订单，在ERP中“阻焊”流程中“1、CS面菲林", "号”、“2、SS面菲林号”参数项都填写“见备注”，然后在工艺备",
      "注栏备注：阻焊菲林使用：工号.ts-1ST,   工号.ts-2ST；    工", "号.bs-1ST,    工号.bs-2ST。"
    ];
    const note1 = ["第三步操作需要", "先将线路文件复", "制出去整体转换", "为Surface，再按", "照要求进行缩", "小，这样可以避", "免线路层存在的", "负向量对阻焊菲", "林的影响"];
    const note2 = ["操作时需要先将", "文件复制出去整", "体转换为", "Surface，再按照", "要求进行制作，", "这样可以避免线", "路层存在的负向", "量对阻焊菲林的", "影响."];

    this.shadowRoot.innerHTML = `
      <style>
        :host { display: block; background: #fff; overflow: hidden; }
        table { width: 100%; table-layout: fixed; border-spacing: 0; border-collapse: separate; }
        th, td { padding: 0; box-sizing: border-box; }
        thead th {
          height: 33px;
          font: 26px/32px "Liberation Serif", serif;
          color: #23403c;
          border-right: 1px solid #9eb6ce;
          border-bottom: 1px solid #9eb6ce;
          background: linear-gradient(#f8fafc, #d3dbe9);
        }
        thead .on { background: linear-gradient(#f9d99f, #f1c15f); border-right-color: #f29536; border-bottom-color: #f29536; }
        thead .corner { background: #a9c4e9; }
        .corner svg { display: block; margin: 5px 3px 0 auto; }
        tbody th {
          vertical-align: bottom;
          font: 24px/25px "Liberation Serif", serif;
          color: #23403c;
          background: #b6c1d1;
          border-right: 1px solid #9eb6ce;
          border-bottom: 1px solid #8fa5bf;
        }
        tbody .plain { background: #e4ecf7; }
        td { font: 300 21px/22px "Noto Sans CJK SC", sans-serif; color: #000; vertical-align: middle; }
        p { margin: 0; height: 26px; white-space: pre; text-spacing-trim: space-all; }
        span { font: 18px/18px "Liberation Mono", monospace; }
        em { font-style: normal; }
        .red { color: #e00000; }
        .blue { color: #0000d0; }
        .a { border-right: 2px solid #000; }
        .box { border-right: 1px solid #000; border-bottom: 1px solid #000; padding-left: 3px; }
        .mid { text-align: center; padding: 0; }
        .edge { border-right: 2px solid #000; }
        .r21 { height: 501px; }
        .r22 { height: 26px; }
        .r23 { height: 230px; }
        .r24 { height: 132px; }
        .r22 p { height: 25px; line-height: 25px; }
        .clip { height: 228px; overflow: hidden; }
        .low { vertical-align: bottom; padding-bottom: 2px; }
        .high { vertical-align: top; padding-top: 16px; }
        .lift { padding-bottom: 24px; }
      </style>
      <table>
        <colgroup>
          <col style="width:50px"><col style="width:22px"><col style="width:108px"><col style="width:123px"><col style="width:120px"><col style="width:126px">
          <col style="width:136px"><col style="width:267px"><col style="width:169px"><col style="width:115px"><col>
        </colgroup>
        <thead>
          <tr>
            <th class="corner"><svg width="24" height="24" viewBox="0 0 24 24"><path d="M24 0v24H0z" fill="#e3ecf8"/></svg></th>
            ${["A", "B"].map(c => `<th>${c}</th>`).join("")}${["C", "D", "E", "F", "G"].map(c => `<th class="on">${c}</th>`).join("")}${["I", "J"].map(c => `<th>${c}</th>`).join("")}<th></th>
          </tr>
        </thead>
        <tbody>
          <tr class="r21">
            <th>21</th><td class="a" rowspan="4"></td>
            <td class="box high" rowspan="3">${lines(["4、厚铜静", "电喷涂制", "作要求"])}</td>
            <td class="box mid lift" rowspan="3">${lines(["  塞孔板的", "制作"])}</td>
            <td class="box low" colspan="4">${lines(step1)}</td>
            <td class="box mid edge">${lines(note1)}</td>
            <td rowspan="4"></td><td rowspan="4"></td>
          </tr>
          <tr class="r22"><th>22</th><td class="box" colspan="4">${lines(["②“曝光2”菲林的制作方法："])}</td><td class="box edge"></td></tr>
          <tr class="r23"><th>23</th><td class="box" colspan="4">${lines(step2)}</td><td class="box edge"><div class="clip">${lines(note2)}</div></td></tr>
          <tr class="r24">
            <th class="plain">24</th>
            <td class="box">${lines(["5、厚铜静", "电喷涂ERP", "信息"])}</td>
            <td class="box mid">${lines(["ERP备注"])}</td>
            <td class="box" colspan="4">${lines(erp)}</td><td class="box edge"></td>
          </tr>
        </tbody>
      </table>
    `;
  }
}

class SheetTabs extends HTMLElement {
  constructor() {
    super();
    this.attachShadow({ mode: "open" });
    this.shadowRoot.innerHTML = `
      <style>
        :host { display: block; flex: none; height: 22px; overflow: hidden; background: #cfe0f7; }
        .bar { display: flex; height: 16px; background: linear-gradient(#84a6d6, #a0b9dd 6px, #9ab4d9); border-bottom: 1px solid #5c7ba8; }
        .nav { display: flex; align-items: center; justify-content: space-around; width: 62px; background: linear-gradient(#e8f0fb, #bcd0ee); border: 1px solid #8eabd6; box-sizing: border-box; }
        .nav button { padding: 0; border: 0; background: none; display: block; }
        .nav svg { display: block; fill: #1e4ea0; stroke: #1e4ea0; }
        .tab { width: 72px; padding: 0; border: 0; background: #fff; color: #15428b; font: 14px/14px "Noto Sans CJK SC", sans-serif; clip-path: polygon(0 0, 100% 0, 92% 100%, 6% 100%); }
        .new { width: 40px; padding: 0; border: 0; background: #d3e2f6; clip-path: polygon(24% 0, 100% 0, 76% 100%, 0 100%); }
        .status { display: flex; justify-content: space-between; height: 20px; padding: 2px 45px 0 6px; font: 12px/16px "Noto Sans CJK SC", sans-serif; color: #39597c; }
        .views { width: 58px; border: 1px solid #7d9cc9; background: linear-gradient(90deg, #f5c58a 33%, #c8d8ee 33%); }
      </style>
      <div class="bar">
        <div class="nav">
          <button aria-label="first"><svg width="7" height="9" viewBox="0 0 7 9"><path d="M.5 0v9M6 1v7L2 4.500z"/></svg></button>
          <button aria-label="previous"><svg width="5" height="9" viewBox="0 0 5 9"><path d="M4 1v7L1 4.500z"/></svg></button>
          <button aria-label="next"><svg width="5" height="9" viewBox="0 0 5 9"><path d="M1 1v7l3-3.500z"/></svg></button>
          <button aria-label="last"><svg width="7" height="9" viewBox="0 0 7 9"><path d="M6.500 0v9M1 1v7l4-3.500z"/></svg></button>
        </div>
        <button class="tab">静电喷涂</button>
        <button class="new" aria-label="new sheet"><svg width="16" height="13" viewBox="0 0 16 13"><path d="M4 3h10v7l-2 2H4z" fill="#fff" stroke="#6a7fa4"/><path d="M4 0v7M0 3.500h8M1 1l6 5M7 1L1 6" stroke="#e8922c"/></svg></button>
      </div>
      <div class="status"><span>就绪</span><span class="views"></span></div>
    `;
  }
}

customElements.define("editor-menu", EditorMenu);
customElements.define("layer-panel", LayerPanel);
customElements.define("pcb-canvas", PcbCanvas);
customElements.define("editor-status", EditorStatus);
customElements.define("graphic-editor", GraphicEditor);
customElements.define("excel-title", ExcelTitle);
customElements.define("excel-ribbon", ExcelRibbon);
customElements.define("formula-bar", FormulaBar);
customElements.define("excel-sheet", ExcelSheet);
customElements.define("sheet-tabs", SheetTabs);
customElements.define("excel-window", ExcelWindow);
</script>
</body>
</html>
